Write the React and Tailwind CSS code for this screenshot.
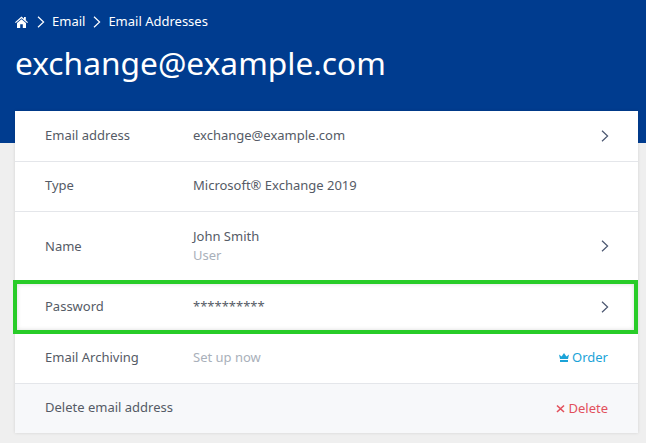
const font = "font-['Noto_Sans',sans-serif]";

function Chevron({ className = "" }) {
    return (
        <svg width="8" height="12" viewBox="0 0 8 12" fill="none" stroke="currentColor" strokeWidth="1.2" className={className}>
            <path d="M1 0.8 L6.6 6 L1 11.2" />
        </svg>
    );
}

function Crumb({ children }) {
    return (
        <>
            <Chevron className="ml-[8px] mr-[7px] text-white" />
            <span>{children}</span>
        </>
    );
}

function Row({ label, children, action, height = "h-[50px]", last = false, className = "", labelClass = "" }) {
    return (
        <div className={`relative flex items-center pl-[30px] pr-[30px] ${height} ${last ? "" : "border-b border-[#e4e6ea]"} ${className}`}>
            <div className={`w-[148px] shrink-0 text-[13px] text-[#555b66] ${labelClass}`}>{label}</div>
            <div className="flex-1 text-[13px] text-[#555b66]">{children}</div>
            {action}
        </div>
    );
}

const chevron = <Chevron className="mr-[-1px] text-[#4a5670]" />;

export default function App() {
    return (
        <div className={`relative h-[443px] w-[646px] overflow-hidden bg-[#efefef] ${font}`}>
            <div className="h-[143px] bg-[#003c8f] pl-[15px] pt-[13px] text-white">
                <div className="flex h-[18px] items-center text-[13px]">
                    <svg width="13" height="12" viewBox="0 0 13 12" fill="white" className="mr-[1px]">
                        <path d="M6.5 0.5 L0 6.2 L0.8 7.1 L6.5 2.2 L12.2 7.1 L13 6.2 L10.8 4.3 L10.8 1 L9 1 L9 2.7 Z" />
                        <path d="M6.5 3.2 L2 7 L2 12 L5.2 12 L5.2 8.3 L7.8 8.3 L7.8 12 L11 12 L11 7 Z" />
                    </svg>
                    <Crumb>Email</Crumb>
                    <Crumb>Email Addresses</Crumb>
                </div>
                <h1 className="mt-[11px] text-[31.7px] leading-[42px] font-normal">exchange@example.com</h1>
            </div>

            <div className="relative mt-[-32px] ml-[15px] w-[623px] bg-white shadow-[0_0_3px_rgba(0,0,0,0.12)]">
                <Row label="Email address" height="h-[51px]" action={chevron}>exchange@example.com</Row>
                <Row label="Type" className="pb-[2px]">Microsoft® Exchange 2019</Row>
                <Row label="Name" height="h-[69px]" labelClass="mt-[2px]" action={chevron}>
                    <div className="leading-[19px]">John Smith</div>
                    <div className="leading-[19px] text-[#a9b0ba]">User</div>
                </Row>
                <Row label="Password" height="h-[52px]" last action={chevron}>**********</Row>
                <Row
                    label="Email Archiving"
                    height="h-[51px]"
                    className="pb-[1px]"
                    action={
                        <span className="flex items-center text-[13px] text-[#1ba3d8]">
                            <svg width="10" height="9" viewBox="0 0 10 9" fill="currentColor" className="mr-[3px]">
                                <path d="M0 1.5 L2.6 3.6 L5 0 L7.4 3.6 L10 1.5 L9 6 L1 6 Z" />
                                <rect x="1" y="7" width="8" height="2" />
                            </svg>
                            Order
                        </span>
                    }
                >
                    <span className="text-[#a9b0ba]">Set up now</span>
                </Row>
                <Row
                    label="Delete email address"
                    height="h-[49px]"
                    last
                    className="bg-[#f7f8fa]"
                    labelClass="mb-[2px]"
                    action={
                        <span className="flex items-center text-[13px] text-[#e2505c]">
                            <svg width="9" height="9" viewBox="0 0 9 9" className="mr-[3px]" stroke="currentColor" strokeWidth="1.6" fill="none">
                                <path d="M1 1.5 L8 8 M8 1.5 L1 8" />
                            </svg>
                            Delete
                        </span>
                    }
                >
                    {""}
                </Row>
                {/* green highlight over the password row */}
                <div className="pointer-events-none absolute left-[-2px] right-0 top-[169px] h-[54px] border-[4px] border-[#28cc28] shadow-[inset_0_0_4px_rgba(0,0,0,0.15)]" />
            </div>
        </div>
    );
}
